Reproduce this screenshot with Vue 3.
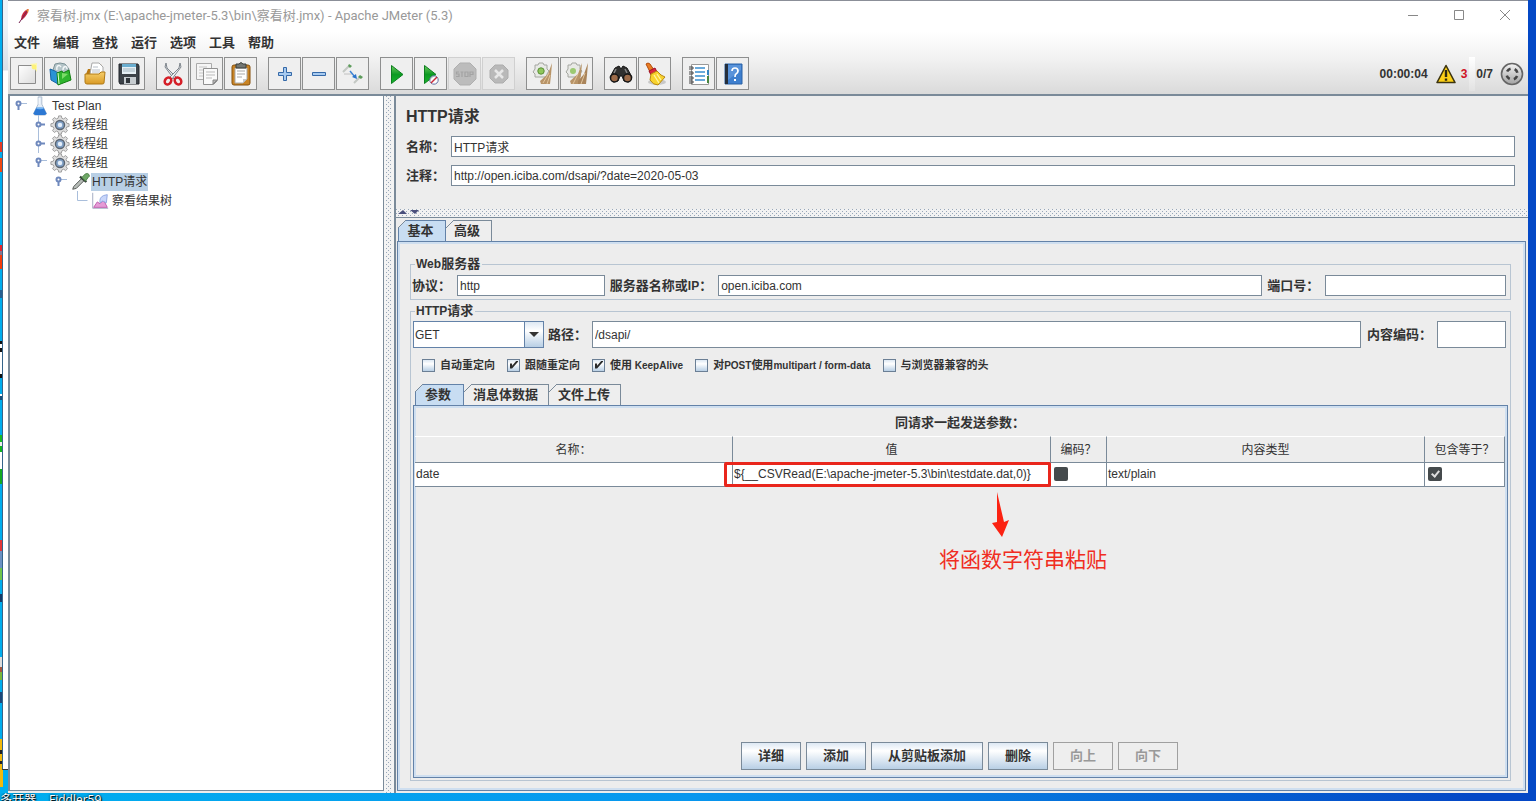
<script setup>
import { ref } from 'vue'

const menus = ['文件', '编辑', '查找', '运行', '选项', '工具', '帮助']

const toolGroups = [
  [
    { label: '新建', art: '<path d="M3.5 3.5h17v18h-17z" fill="url(#paper)" stroke="#8c8c8c"/><path d="M15 2l7-1v9z" fill="#fff9a0" opacity=".8"/><circle cx="19" cy="5" r="2.4" fill="#fdf27a"/>' },
    { label: '模板', art: '<path d="M4 8l2-6 5-1 5 1 4 5-1 6H6z" fill="#b4c4c8" stroke="#7d9297"/><path d="M8 8c-1-4 2-6 4-3M14 8c0-4 4-5 4-1" fill="none" stroke="#f2f6f7" stroke-width="1.4"/><path d="M1 7l5 2 3 2v11l-7-4z" fill="#2a93d6" stroke="#1765a5"/><path d="M8 11l5-2 1 2 6-3 2 10-13 5z" fill="#2fb52e" stroke="#138013"/><path d="M13 11v6l6-5z" fill="#7bdd68"/><path d="M9 11l1 11" stroke="#d8ffd0"/>' },
    { label: '打开', art: '<path d="M3 12L5 7h4l1-5h8l2 9 1 3z" fill="#b87812"/><path d="M7 12L9 1h7l4 4v9H7z" fill="#fff" stroke="#a8a8a8"/><path d="M10 5h5M9 8h8M9 10h8" stroke="#b8bfc8"/><path d="M2 12h14l2-2h4l-1 11q0 1-2 1H4q-2 0-2-2z" fill="url(#folder)" stroke="#b07a17"/>' },
    { label: '保存', art: '<path d="M2 2h19l1 2v18H3l-1-2z" fill="#3c4248" stroke="#22272c"/><path d="M5 2h14v10H5z" fill="#e6f0f5"/><path d="M5 2h14v3H5z" fill="#6aaed0"/><path d="M6 7h12M6 9h12" stroke="#a3b5bf"/><path d="M7 15h12v7H7z" fill="#c6ccd0"/><path d="M9 16h4v5H9z" fill="#30363b"/>' }
  ],
  [
    { label: '剪切', art: '<path d="M5 1l1 5 10 10-3 1L4 5z" fill="#dfe3e7" stroke="#7e858c"/><path d="M19 1l-1 5L8 16l3 1 9-12z" fill="#eff1f3" stroke="#7e858c"/><ellipse cx="7" cy="19" rx="3" ry="3.7" transform="rotate(35 7 19)" fill="none" stroke="#d51f28" stroke-width="2.6"/><ellipse cx="17" cy="19" rx="3" ry="3.7" transform="rotate(-35 17 19)" fill="none" stroke="#d51f28" stroke-width="2.6"/>' },
    { label: '复制', art: '<path d="M1.500 1.500h15v16h-15z" fill="#f5f5f5" stroke="#aaa"/><path d="M4 5h8M4 8h8M4 11h6M4 14h6" stroke="#c5c5c5"/><path d="M8.500 6.500h14v12l-4 4h-10z" fill="#fafafa" stroke="#919191"/><path d="M11 10h9M11 13h9M11 16h6" stroke="#bbb"/><path d="M22 18h-4v4z" fill="#bbb" stroke="#888"/>' },
    { label: '粘贴', art: '<rect x="3" y="3" width="18" height="20" rx="2" fill="#c98425" stroke="#85500d"/><path d="M6 6h12v11l-4 4H6z" fill="#fff" stroke="#aaa"/><path d="M8 9h8M8 12h8M8 15h5" stroke="#a9a9a9"/><path d="M18 17h-4v4z" fill="#c8c8c8"/><path d="M7 2h3q2-3 4 0h3v4H7z" fill="#737773" stroke="#3b3e3b"/>' }
  ],
  [
    { label: '全部展开', art: '<path d="M10.500 5.500h3v5h5v3h-5v5h-3v-5h-5v-3h5z" fill="#a8cbf0" stroke="#3569a8"/>' },
    { label: '全部折叠', art: '<path d="M5.500 10.500h13v3h-13z" fill="#a8cbf0" stroke="#3569a8"/>' },
    { label: '切换', art: '<path d="M2 10l6-6M13 21l6-6" stroke="#c4c8c4" stroke-width="2"/><path d="M8 2l3 2-2 2-2-2zM19 13l3 2-2 2-3-2z" fill="#5c9b5a"/><path d="M3 12h8" stroke="#c0c0c0"/><path d="M9 9l5 6" stroke="#3d82d4" stroke-width="1.4"/><path d="M11 15l5 2-1-5z" fill="#2b74cc"/>' }
  ],
  [
    { label: '启动', art: '<path d="M6.500 3.500L18 12.500 6.500 21.500z" fill="url(#go)" stroke="#0c7e1f"/>' },
    { label: '不停顿开始', art: '<path d="M5.500 3.500L17 12.500 5.500 21.500z" fill="url(#go)" stroke="#0c7e1f"/><circle cx="15" cy="18" r="4.200" fill="#fff" fill-opacity=".75" stroke="#6572a6"/><path d="M12 21l6-6" stroke="#c82838" stroke-width="1.5"/>' },
    { label: '停止', off: true, art: '<path d="M7 1h10l6 6v10l-6 6H7l-6-6V7z" fill="#bcbcbc" stroke="#afafaf"/><path d="M6 10H3.500v2H6v2.500H3M7.500 10h3m-1.500 0v5M12 10h3v4.500h-3zM17 15v-5h3v2.500h-3" fill="none" stroke="#a3a3a3" stroke-width="1.200"/>' },
    { label: '关闭', off: true, art: '<path d="M8 3h8l5 5v8l-5 5H8l-5-5V8z" fill="#b9b9b9" stroke="#adadad"/><path d="M8 8l8 8m0-8l-8 8" stroke="#e7e7e7" stroke-width="2.500"/>' }
  ],
  [
    { label: '清除', art: '<path d="M4 3h3l1-2h4l1 2h3v4l2 2-2 3v3H4v-3l-2-2 2-3z" fill="#e8e9e6" stroke="#a4a6a0"/><circle cx="10" cy="9" r="3.200" fill="#8fc75c" stroke="#5b8f37"/><path d="M21 1l-4 11-8 7 1 3h9l1-9z" fill="#b89468"/><path d="M18 11l-6 10M19 13l-3 9" stroke="#e2c59d"/>' },
    { label: '清除全部', art: '<path d="M3 3h3l1-2h4l1 2h3v4l2 2-2 3v3H3v-3l-2-2 2-3z" fill="#e8e9e6" stroke="#a4a6a0"/><circle cx="8" cy="9" r="3" fill="#9cca72"/><path d="M17 1l-4 11-8 7 1 3h8l2-9z" fill="#b89468"/><path d="M23 1l-4 11-6 7v3h8l1-9z" fill="#a9845a"/><path d="M13 12L8 22M20 11l-4 11" stroke="#e2c59d"/>' }
  ],
  [
    { label: '查找', art: '<path d="M6 6l4-2 2 3 2-3 4 2 5 9-3 5-5-1-2-5h-2l-2 5-5 1-3-5z" fill="#30302f" stroke="#171717"/><circle cx="5.500" cy="16" r="4" fill="#9b6a48" stroke="#171717" stroke-width="1.500"/><circle cx="18.500" cy="16" r="4" fill="#9b6a48" stroke="#171717" stroke-width="1.500"/><path d="M7 7l-2 4M16 7l2 4" stroke="#878787" stroke-width="1.500"/>' },
    { label: '重置搜索', art: '<ellipse cx="14" cy="20" rx="9" ry="3" fill="#c8c8c8"/><path d="M3 2q2-2 4 0l4 6-4 2z" fill="#e87d24" stroke="#b44c0c"/><path d="M6 9l6-3 2 4-6 3z" fill="#d7263e" stroke="#9f1126"/><path d="M8 12l6-3q4 5 8 6l-7 8q-5 0-8-5z" fill="#f8d32e" stroke="#b88711"/><path d="M11 13l5 8M14 12l4 6" stroke="#fff5a1" stroke-width="1.300"/>' }
  ],
  [
    { label: '函数助手', art: '<path d="M4.500 2.500h17v20h-17z" fill="#fff" stroke="#999"/><path d="M8 6h10M8 10h10M8 14h10M8 18h10" stroke="#3a8ed0" stroke-width="1.500"/><path d="M2 5h4v2H2m0 3h4v2H2m0 3h4v2H2m0 2h4v2H2" fill="none" stroke="#444"/><path d="M21 8v5" stroke="#3484c2" stroke-width="2"/><path d="M21 14v7" stroke="#49863f" stroke-width="2"/>' },
    { label: '帮助', art: '<path d="M4 2h17v20H4z" fill="#3e7fce" stroke="#2b62a6"/><path d="M4 2h3v20H4z" fill="#262f3c"/><path d="M7 3h13v5L7 18z" fill="#73a8e6" opacity=".5"/><path d="M11 9q0-3 3-3t3 3q0 2-2 3-1 .500-1 3" fill="none" stroke="#fff" stroke-width="1.700"/><path d="M13 17h2v2h-2z" fill="#fff"/>' }
  ]
]

const gear = '<path d="M8.500 1h3l.500 2.500 2 .8 2.200-1.500 2 2-1.500 2.300.8 2 2.500.500v3l-2.500.500-.8 2 1.500 2.200-2 2-2.200-1.500-2 .8-.500 2.400h-3l-.500-2.500-2-.8-2.200 1.500-2-2 1.500-2.200-.8-2L0 12.600v-3l2.500-.500.8-2L1.800 4.800l2-2L6 4.300l2-.8z" fill="#dedede" stroke="#989898"/><circle cx="10" cy="11" r="5" fill="#7f9fc4" stroke="#5a6470" stroke-width="1.500"/><circle cx="10" cy="11" r="2.500" fill="#e4eefa"/>'
const flask = '<path d="M8 1h4v8l5 10q0 2-2 2H5q-2 0-2-2L8 9z" fill="#e4edf7" stroke="#a9b9cc"/><path d="M6 13h8l3 6q0 2-2 2H5q-2 0-2-2z" fill="#2c78d3"/><path d="M9 2v7" stroke="#fff"/><ellipse cx="10" cy="13.500" rx="4" ry="1" fill="#75b5f2"/>'
const dropper = '<path d="M2 19l1-3L12 7l3 2-9 9z" fill="#b7bcb8" stroke="#4c514d"/><path d="M10 5l7 6" stroke="#313f34" stroke-width="2.500"/><path d="M12 6l4-4q3-1 4 1t-1 3l-3 4z" fill="#6fa866" stroke="#4a7d46"/>'
const chart = '<path d="M2 2v17h17" fill="none" stroke="#9da7be"/><path d="M3 18l4-6 3 2 4-4 4 8z" fill="#e59bd6" stroke="#bd58ab"/><path d="M10 13q-1-6 4-8l4-1-1 9-4-2z" fill="#c8d6fa" stroke="#8ca3df"/>'

const nodes = [
  { text: 'Test Plan', level: 0, art: flask, handle: 'open' },
  { text: '线程组', level: 1, art: gear, handle: 'closed' },
  { text: '线程组', level: 1, art: gear, handle: 'closed' },
  { text: '线程组', level: 1, art: gear, handle: 'open' },
  { text: 'HTTP请求', level: 2, art: dropper, handle: 'open', selected: true },
  { text: '察看结果树', level: 3, art: chart, handle: 'leaf' }
]

const form = ref({
  name: 'HTTP请求',
  comment: 'http://open.iciba.com/dsapi/?date=2020-05-03',
  protocol: 'http',
  server: 'open.iciba.com',
  port: '',
  method: 'GET',
  path: '/dsapi/',
  encoding: ''
})

const options = ref([
  { parts: [['cjk', '自动重定向']], on: false },
  { parts: [['cjk', '跟随重定向']], on: true },
  { parts: [['cjk', '使用'], ['latin', ' KeepAlive']], on: true },
  { parts: [['cjk', '对'], ['latin', 'POST'], ['cjk', '使用'], ['latin', 'multipart / form-data']], on: false },
  { parts: [['cjk', '与浏览器兼容的头']], on: false }
])

const actions = [
  { text: '详细' }, { text: '添加' }, { text: '从剪贴板添加' }, { text: '删除' },
  { text: '向上', off: true }, { text: '向下', off: true }
]
</script>

<template>
  <div class="desktop">
    <div class="strip" aria-hidden="true"></div>
    <div class="behind" aria-hidden="true"></div>
    <svg class="defs" aria-hidden="true">
      <defs>
        <linearGradient id="paper" x1="0" y1="0" x2="1" y2="1"><stop offset="0" stop-color="#fff" /><stop offset="1" stop-color="#dcdcdc" /></linearGradient>
        <linearGradient id="folder" x1="0" y1="0" x2="0" y2="1"><stop offset="0" stop-color="#f7cf6b" /><stop offset="1" stop-color="#d99a26" /></linearGradient>
        <linearGradient id="go" x1="0" y1="0" x2="0" y2="1"><stop offset="0" stop-color="#6fc95f" /><stop offset=".5" stop-color="#0c9a22" /><stop offset="1" stop-color="#17b52c" /></linearGradient>
        <linearGradient id="ring" x1="0" y1="0" x2="0" y2="1"><stop offset="0" stop-color="#f4f4f4" /><stop offset="1" stop-color="#a2a2a2" /></linearGradient>
      </defs>
    </svg>

    <main class="window">
      <header class="titlebar">
        <svg class="feather" width="12" height="16" viewBox="0 0 12 16"><path d="M3 12Q3 4 10 1q1 5-6 11z" fill="#c8283c" /><path d="M1 15L9 3" stroke="#762252" /><path d="M8 2l3-1-1 4z" fill="#e58431" /></svg>
        <h1>察看树.jmx (E:\apache-jmeter-5.3\bin\察看树.jmx) - Apache JMeter (5.3)</h1>
        <div class="caption-buttons">
          <button aria-label="最小化"><svg width="12" height="12"><path d="M1 5.500h10" /></svg></button>
          <button aria-label="最大化"><svg width="12" height="12"><path d="M1.500 .500h9v9h-9z" /></svg></button>
          <button aria-label="关闭窗口"><svg width="12" height="12"><path d="M1 0l10 10M11 0L1 10" /></svg></button>
        </div>
      </header>

      <div class="bars">
        <nav class="menubar"><button v-for="m in menus" :key="m">{{ m }}</button></nav>
        <div class="toolbar">
          <div v-for="(group, g) in toolGroups" :key="g" class="tool-group">
            <button v-for="t in group" :key="t.label" :aria-label="t.label" :disabled="t.off">
              <svg width="24" height="24" viewBox="0 0 24 24" fill="none" v-html="t.art"></svg>
            </button>
          </div>
          <div class="status">
            <span>00:00:04</span>
            <button class="warn" aria-label="日志">
              <svg width="20" height="20" viewBox="0 0 20 20"><path d="M10 1.500L19 18.500H1z" fill="#fdd017" stroke="#3c3410" stroke-width="1.600" stroke-linejoin="round" /><path d="M10 6v7M10 14.500v2.200" stroke="#2f2a13" stroke-width="2.400" /></svg>
              <span>3</span>
            </button>
            <i></i>
            <span>0/7</span>
            <svg class="remote" width="24" height="24" viewBox="0 0 24 24"><circle cx="12" cy="12" r="10.500" fill="url(#ring)" stroke="#666" stroke-width="1.600" /><circle cx="12" cy="12" r="5.500" fill="none" stroke="#444" stroke-width="2.600" stroke-dasharray="4.320 4.320" stroke-dashoffset="-2.160" /></svg>
          </div>
        </div>
      </div>

      <div class="workspace">
        <aside class="tree">
          <ul>
            <li v-for="(n, i) in nodes" :key="i" :class="'level-' + n.level">
              <svg v-if="n.handle === 'open'" class="handle" width="16" height="19"><path class="guide" d="M7 7.500h6" /><path d="M4.500 9v5" /><circle cx="4.500" cy="7.500" r="2" /></svg>
              <svg v-else-if="n.handle === 'closed'" class="handle" width="16" height="19"><path class="guide" d="M4.500 0v19" /><path d="M6 9.500h5" /><circle cx="4.500" cy="9.500" r="2" /></svg>
              <svg v-else class="handle" width="16" height="19"><path class="guide" d="M3.500 0v9.500h10" /></svg>
              <svg class="node-icon" width="20" height="20" viewBox="0 0 20 22" fill="none" v-html="n.art"></svg>
              <span :class="{ selected: n.selected }">{{ n.text }}</span>
            </li>
          </ul>
        </aside>
        <div class="splitter"></div>

        <section class="editor">
          <div class="identity">
            <h2>HTTP请求</h2>
            <div class="field"><label for="name">名称：</label><input id="name" v-model="form.name" type="text"></div>
            <div class="field"><label for="comment">注释：</label><input id="comment" v-model="form.comment" type="text"></div>
          </div>
          <div class="splitter-h"><svg width="22" height="8"><path d="M0 5h9L5 1zM12 1h9l-4 4z" fill="#4a4f7c" /></svg></div>

          <div class="tabs main-tabs"><button class="active">基本</button><button>高级</button></div>
          <div class="pane main-pane">
            <fieldset>
              <legend><small>Web</small>服务器</legend>
              <div class="line server-line">
                <label for="protocol">协议：</label><input id="protocol" v-model="form.protocol" class="w-protocol" type="text">
                <label for="server">服务器名称或<small>IP</small>：</label><input id="server" v-model="form.server" class="w-server" type="text">
                <label for="port">端口号：</label><input id="port" v-model="form.port" class="w-port" type="text">
              </div>
            </fieldset>
            <fieldset class="request">
              <legend><small>HTTP</small>请求</legend>
              <div class="line path-line">
                <div class="combo">
                  <select v-model="form.method" aria-label="方法"><option>GET</option><option>POST</option></select>
                  <span><svg width="10" height="6"><path d="M0 0h10L5 5z" fill="#333" /></svg></span>
                </div>
                <label for="path">路径：</label><input id="path" v-model="form.path" class="w-path" type="text">
                <label for="encoding">内容编码：</label><input id="encoding" v-model="form.encoding" class="w-encoding" type="text">
              </div>
              <div class="checks">
                <label v-for="(o, i) in options" :key="i">
                  <input v-model="o.on" type="checkbox">
                  <span><span v-for="(p, j) in o.parts" :key="j" :class="p[0]">{{ p[1] }}</span></span>
                </label>
              </div>
              <div class="tabs sub-tabs"><button class="active">参数</button><button>消息体数据</button><button>文件上传</button></div>
              <div class="pane sub-pane">
                <table>
                  <caption>同请求一起发送参数：</caption>
                  <colgroup><col><col><col class="c-code"><col><col class="c-equal"></colgroup>
                  <thead><tr><th>名称：</th><th>值</th><th>编码？</th><th>内容类型</th><th>包含等于？</th></tr></thead>
                  <tbody>
                    <tr>
                      <td>date</td>
                      <td class="marked">
                        ${__CSVRead(E:\apache-jmeter-5.3\bin\testdate.dat,0)}
                        <div class="mark"></div>
                        <div class="note">
                          <svg width="20" height="48" viewBox="0 0 20 48"><path d="M6 1l7 30 5-2-7 17L1 32l5-1z" fill="#fb2212" /></svg>
                          <p>将函数字符串粘贴</p>
                        </div>
                      </td>
                      <td><input type="checkbox" class="dark" aria-label="编码"></td>
                      <td>text/plain</td>
                      <td><input type="checkbox" class="dark" aria-label="包含等于" checked></td>
                    </tr>
                  </tbody>
                </table>
                <div class="actions"><button v-for="a in actions" :key="a.text" :disabled="a.off">{{ a.text }}</button></div>
              </div>
            </fieldset>
          </div>
        </section>
      </div>
    </main>

    <footer class="shortcuts"><span>多开器</span><span>Fiddler59</span></footer>
  </div>
</template>

<style>
body { margin: 0; overflow: hidden; }
</style>

<style scoped>
* { box-sizing: border-box; }

.desktop {
  position: relative;
  display: flex;
  flex-direction: column;
  height: 100vh;
  overflow: hidden;
  background: linear-gradient(90deg, #00aeef 0%, #0796ee 45%, #0448c6 96%);
  color: #333;
  font: 12px/18px "Liberation Sans", "Noto Sans CJK SC", sans-serif;
}
button, input, select { font: inherit; color: inherit; margin: 0; border-radius: 0; }
button { padding: 0; border: 0; background: none; }
svg { display: block; flex: none; }
.defs { position: absolute; width: 0; height: 0; }

.strip {
  position: absolute;
  inset: 0 auto 0 0;
  width: 3px;
  background: linear-gradient(180deg, transparent 142px, #e83a24 142px 152px, transparent 152px 158px, #f04812 158px 172px, transparent 172px 245px, #e8232c 245px 251px, #8b748b 251px 255px, #f53c0c 255px 269px, transparent 269px 290px, #255f91 290px 298px, transparent 298px 341px, #111 341px 344px, #fff 344px 348px, #111 348px 352px, #fff 352px 374px, #111 374px 378px, transparent 378px 394px, #fff 394px 396px, #174f7b 396px 400px, transparent 400px 435px, #16bb23 435px 442px, #eee 442px 446px, #10b51e 446px 452px, #fff 452px 469px, #12aa20 469px 484px, transparent 484px 540px, #e33739 540px 551px, #6b91c2 551px 568px, #6fc54b 568px 580px, transparent 580px 594px, #123a68 594px 602px, transparent 602px 657px, #ddd 657px 667px, #a5573f 667px 672px, #79b83b 672px 680px, transparent 680px 692px, #1c4779 692px 703px, transparent 703px 739px, #f2b90c 739px 750px, #222 750px 754px, #f2b90c 754px 761px, #222 761px 764px, #f2b90c 764px 787px, transparent 787px);
}
.behind {
  position: absolute;
  left: 2px;
  top: 0;
  width: 6px;
  height: 770px;
  border-left: 1px solid #35648a;
  border-bottom: 1px solid #333;
  background: linear-gradient(180deg, #eef3f8 24px, #d8dfe7 70px, #fff 71px);
}

.window {
  position: relative;
  flex: 1;
  min-height: 0;
  display: flex;
  flex-direction: column;
  margin: 0 8px;
  border-top: 1px solid #8b8f98;
  background: #ededed;
}
.titlebar { display: flex; align-items: center; height: 30px; padding-left: 10px; background: #fff; }
.feather { margin-right: 7px; }
h1 { flex: 1; margin: 0; color: #999; font: 400 13px/18px Roboto, "Noto Sans CJK SC", sans-serif; }
.caption-buttons { display: flex; }
.caption-buttons button { display: grid; place-items: center; width: 46px; height: 28px; }
.caption-buttons path { fill: none; stroke: #888; }

.bars { background: linear-gradient(180deg, #fff 0, #f0f0f0 30px, #dadada 100%); border-bottom: 2px solid #7a8a99; }
.menubar { display: flex; gap: 13px; height: 23px; padding-left: 6px; }
.menubar button { font-size: 13px; font-weight: 700; }
.toolbar { display: flex; align-items: center; gap: 10px; height: 40px; padding: 0 4px 1px 2px; }
.tool-group { display: flex; }
.tool-group button {
  display: grid;
  place-items: center;
  width: 33px;
  height: 33px;
  margin-right: 1px;
  border: 1px solid #8e8f8f;
  background: #efefef;
}
.tool-group button:disabled { border-color: #d0d0d0; background: #e8e8e8; }
.status { display: flex; align-items: center; margin-left: auto; font-weight: 700; }
.warn { display: flex; align-items: center; gap: 5px; margin-left: 8px; color: #cf1225; font-weight: 700; }
.status i { width: 6px; height: 34px; margin: 0 1px 0 2px; background: linear-gradient(180deg, #fff, #e2e2e2); }
.remote { margin-left: 7px; }

.workspace { flex: 1; min-height: 0; display: flex; }
.tree { width: 25%; max-width: 376px; margin-bottom: 2px; border: solid #7a8a99; border-width: 0 1px 1px 2px; background: #fff; }
.tree ul { margin: 0; padding: 0; list-style: none; }
.tree li { display: flex; align-items: center; height: 19px; }
.level-0 { padding-left: 4px; }
.level-1 { padding-left: 24px; }
.level-2 { padding-left: 44px; }
.level-3 { padding-left: 64px; }
.handle { overflow: visible; fill: #fff; stroke: #6f89bd; stroke-width: 2; }
.handle .guide { fill: none; stroke: #a9bedb; stroke-width: 1; }
.node-icon { margin-right: 1px; }
.tree span { padding: 0 1px; }
.tree .selected { background: #b8cfe5; }
.splitter, .splitter-h {
  background-color: #f2f2f2;
  background-image: linear-gradient(#a3b1c2, #a3b1c2), linear-gradient(#a3b1c2, #a3b1c2);
  background-size: 1px 1px;
  background-image: conic-gradient(from 270deg at 1px 1px, #98a7b9 90deg, transparent 0), conic-gradient(from 270deg at 1px 1px, #98a7b9 90deg, transparent 0);
  background-size: 4px 4px;
  background-position: 0 0, 2px 2px;
}
.splitter { width: 10px; border: solid #f4f4f4; border-width: 0 2px; }

.editor { flex: 1; min-width: 0; display: flex; flex-direction: column; border-left: 2px solid #7a8a99; }
.identity { display: flex; flex-direction: column; gap: 8px; height: 113px; padding: 10px 13px 0 10px; }
h2 { margin: 0; font-size: 16px; font-weight: 700; line-height: 22px; }
.field { display: flex; align-items: center; }
.field label { width: 45px; }
label, legend, caption { font-size: 13px; font-weight: 700; }
label { white-space: nowrap; }
small { font-size: 12px; }
input[type="text"] { min-width: 0; height: 21px; padding: 0 2px; border: 1px solid #7a8a99; background: #fff; outline: 0; }
.field input { flex: 1; }
.splitter-h { height: 9px; padding-left: 2px; border-bottom: 1px solid #7a8a99; }

.tabs { display: flex; }
.tabs button {
  position: relative;
  height: 21px;
  border: 1px solid #7a8a99;
  border-width: 1px 1px 0 0;
  border-top-left-radius: 6px;
  background: #eee;
  font-size: 13px;
  font-weight: 700;
  line-height: 18px;
}
.tabs button::before {
  content: "";
  position: absolute;
  left: 0;
  top: -1px;
  width: 8px;
  height: 8px;
  background: linear-gradient(135deg, #ededed 44%, #7a8a99 45% 55%, transparent 56%);
}
.tabs .active { border-color: #6382a8; border-left-width: 1px; background: #c8ddf2; }
.tabs .active::before { left: -1px; }
.main-tabs { padding: 2px 0 0 2px; }
.main-tabs button { width: 46px; padding-right: 3px; }
.main-tabs .active { width: 48px; }
.pane { border: 1px solid #6382a8; box-shadow: inset 0 0 0 2px #cfdff0; }
.main-pane { flex: 1; min-height: 0; display: flex; flex-direction: column; gap: 2px; margin: 0 2px 2px 1px; padding: 13px 14px 9px 12px; }

fieldset { min-width: 0; margin: 0; padding: 2px 4px 3px 1px; border: 1px solid #b8c5d2; }
legend { margin-left: 3px; padding: 0 2px 0 1px; line-height: 18px; }
.line { display: flex; align-items: center; }
.server-line input { margin-right: 5px; }
.server-line input:last-child, .path-line input:last-child { margin-right: 0; }
.w-protocol { flex: 148 1 148px; margin-left: 6px; }
.w-server { flex: 545 1 545px; margin-left: 6px; }
.w-port { flex: 181 1 181px; margin-left: 6px; }
.request { flex: 1; display: flex; flex-direction: column; padding: 1px 2px 2px; }
.request legend { margin-left: 2px; }
.path-line { padding-right: 2px; }
.path-line input[type="text"] { height: 27px; }
.combo { position: relative; width: 131px; height: 27px; margin-right: 4px; }
.combo select { width: 100%; height: 27px; padding: 0 1px; border: 1px solid #6382a8; background: #fff; appearance: none; outline: 0; }
.combo span {
  position: absolute;
  inset: 0 0 0 auto;
  display: grid;
  place-items: center;
  width: 20px;
  border: 1px solid #6382a8;
  background: linear-gradient(180deg, #dde8f3, #fff 35%, #b8cfe5);
  pointer-events: none;
}
.w-path { flex: 769 1 769px; margin: 0 6px 0 5px; }
.w-encoding { flex: 69 1 69px; margin-left: 5px; }
.checks { display: flex; gap: 12px; padding: 8px 9px 10px; }
.checks label { display: flex; align-items: center; gap: 5px; height: 18px; font-size: 11px; }
.cjk { font-size: 11px; }
.latin { font-size: 10px; white-space: pre; }
input[type="checkbox"] {
  position: relative;
  flex: none;
  width: 13px;
  height: 13px;
  border: 1px solid #6b7f95;
  background: linear-gradient(180deg, #dde8f3, #fff 35%, #b8cfe5);
  appearance: none;
}
input[type="checkbox"]:checked::after {
  content: "";
  position: absolute;
  left: 2px;
  top: 1px;
  width: 8px;
  height: 8px;
  background: #2b2b2b;
  clip-path: polygon(0 38%, 26% 38%, 26% 66%, 82% 0, 100% 0, 100% 16%, 26% 100%, 0 100%);
}
input[type="checkbox"].dark { display: block; width: 14px; height: 14px; margin-left: 2px; border: 0; border-radius: 2px; background: #454a4c; }
input[type="checkbox"].dark:checked::after {
  left: 5px;
  top: 2px;
  width: 3px;
  height: 6px;
  border: solid #ddd;
  border-width: 0 2px 2px 0;
  background: none;
  clip-path: none;
  transform: rotate(40deg);
}

.sub-tabs { padding-left: 2px; }
.sub-tabs button { padding: 0 10px 0 9px; }
.sub-tabs .active { padding: 0 12px 0 9px; }
.sub-pane { flex: 1; display: flex; flex-direction: column; padding: 1px 2px 7px 1px; }
table { width: 100%; border-collapse: separate; border-spacing: 0; table-layout: fixed; }
caption { padding: 7px 0 4px; line-height: 18px; }
.c-code { width: 56px; }
.c-equal { width: 80px; }
th, td { padding: 0; border: solid #7a8a99; border-width: 0 1px 1px 0; }
th { height: 27px; border-top: 1px solid #fff; font-weight: 400; }
td { height: 24px; padding: 0 1px 1px; background: #fff; white-space: nowrap; }
.marked { position: relative; }
.mark { position: absolute; inset: -1px -1px -1px -9px; z-index: 1; border: 3px solid #e9261c; border-radius: 2px; }
.note { position: absolute; left: 206px; top: 28px; display: flex; flex-direction: column; color: #f02d22; }
.note svg { margin-left: 52px; }
.note p { margin: 5px 0 0; font-size: 21px; line-height: 32px; }
.actions { display: flex; justify-content: center; gap: 5px; margin-top: auto; padding-right: 1px; }
.actions button {
  min-width: 60px;
  height: 28px;
  padding: 0 16px;
  border: 1px solid #7a8a99;
  background: linear-gradient(180deg, #dde8f3, #fff 30%, #b8cfe5);
  font-size: 13px;
  font-weight: 700;
}
.actions button:disabled { border-color: #a0a0a0; background: #eee; color: #999; }

.shortcuts { display: flex; gap: 13px; height: 8px; overflow: hidden; color: #fff; line-height: 14px; text-shadow: 1px 1px 1px #000, 0 0 2px #000; font-family: "Open Sans", "Noto Sans CJK SC", sans-serif; }
</style>
